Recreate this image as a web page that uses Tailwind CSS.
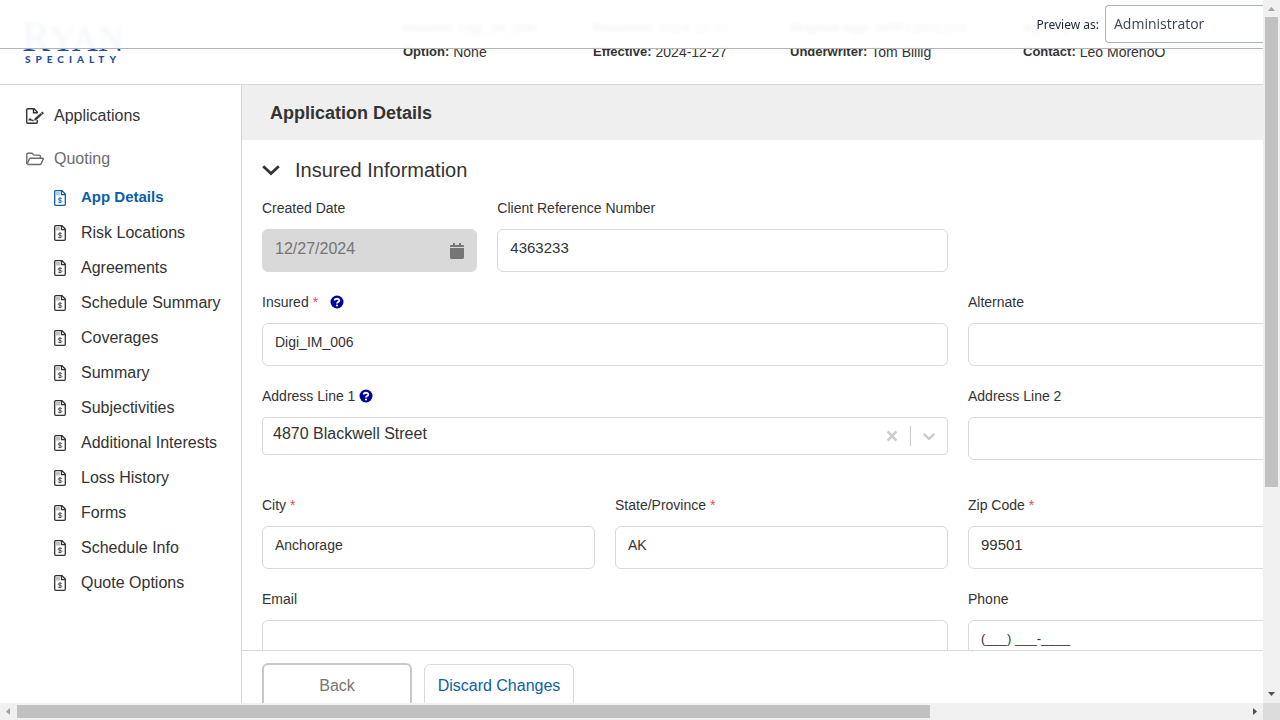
<!DOCTYPE html>
<html lang="en">
<head>
<meta charset="utf-8">
<title>Application Details</title>
<script src="https://cdn.jsdelivr.net/npm/@tailwindcss/browser@4"></script>
</head>
<body class="bg-white font-['Liberation_Sans',Arial,sans-serif] text-[#333]">
<svg class="hidden" aria-hidden="true">
  <symbol id="doc" viewBox="0 0 12 16">
    <path d="M1.7.7H8L11.3 4v10.2a1.100 1.100 0 0 1-1.100 1.100H1.800A1.100 1.100 0 0 1 .7 14.200V1.700a1 1 0 0 1 1-1Z" fill="none" stroke="currentColor" stroke-width="1.300"/>
    <path d="M7.500.7v4h3.800" fill="none" stroke="currentColor" stroke-width="1.300"/>
    <path d="M2 2h4v3.500H2Z" fill="currentColor" opacity=".3"/>
    <path d="M7.900 8.700C7.300 7.900 4.200 7.800 4.200 9.200c0 1.400 3.700.8 3.700 2.200 0 1.500-3.200 1.400-3.900.5M6 7.200v6" fill="none" stroke="currentColor" stroke-width=".8"/>
  </symbol>
  <symbol id="help" viewBox="0 0 14 14">
    <circle cx="7" cy="7" r="6.500" fill="#00009c"/>
    <path d="M4.700 5.500C4.800 3.200 9.300 3.100 9.300 5.500 9.300 7.100 7 6.900 7 8.500" fill="none" stroke="#fff" stroke-width="1.900"/>
    <circle cx="7" cy="10.500" r="1.100" fill="#fff"/>
  </symbol>
</svg>
<div class="grid h-screen grid-cols-[minmax(0,1fr)_17px] grid-rows-[minmax(0,1fr)_17px]">
  <div class="relative overflow-hidden">
    <div class="flex h-full min-w-[1700px] flex-col">
      <header class="flex h-[85px] shrink-0 border-b border-[#d6d6d6]">
        <a href="#" class="block w-[403px] shrink-0 pt-[13px] pl-[22px] text-[#1f4fa3]">
          <span class="block h-10 font-['Liberation_Serif',serif] text-[36px] leading-[48px]"><span class="text-[42px]">R</span>YAN</span>
          <span class="block pl-[3px] font-[Lato,sans-serif] text-[10px] leading-3 font-black tracking-[0.5em]">SPECIALTY</span>
        </a>
        <dl class="grid grid-cols-[190px_197px_233px_auto] content-start pt-4 text-sm leading-6">
          <div class="flex gap-1"><dt class="text-[13px] font-bold">Insured:</dt><dd>Digi_IM_006</dd></div>
          <div class="flex gap-1"><dt class="text-[13px] font-bold">Received:</dt><dd>2024-12-27</dd></div>
          <div class="flex gap-1"><dt class="text-[13px] font-bold">Original App:</dt><dd>APP12691233</dd></div>
          <div class="flex gap-1"><dt class="text-[13px] font-bold">Agency:</dt><dd>RT</dd></div>
          <div class="flex gap-1"><dt class="text-[13px] font-bold">Option:</dt><dd>None</dd></div>
          <div class="flex gap-1"><dt class="text-[13px] font-bold">Effective:</dt><dd>2024-12-27</dd></div>
          <div class="flex gap-1"><dt class="text-[13px] font-bold">Underwriter:</dt><dd>Tom Billig</dd></div>
          <div class="flex gap-1"><dt class="text-[13px] font-bold">Contact:</dt><dd>Leo MorenoO</dd></div>
        </dl>
      </header>
      <div class="flex min-h-0 flex-1">
        <nav class="w-[242px] shrink-0 border-r border-[#d6d6d6] pt-[9px] text-base">
          <a href="#" class="flex h-[43px] items-center gap-2.5 pl-[26px]">
            <svg class="h-4 w-[18px]" viewBox="0 0 18 16" fill="none" stroke="currentColor" stroke-width="1.400"><path d="M11.300 5.200V4L8 .7H1.700a1 1 0 0 0-1 1v12.600a1 1 0 0 0 1 1h8.600a1 1 0 0 0 1-1V12"/><path d="M7.500.7v4h3.800"/><path d="M2.800 12.500c.8-1.300 1.400-2 1.800-.8.400 1 .9-.2 1.500.5.400.4.900.3 1.400.3"/><path d="M8.500 12.300l.6-2 5.500-4.900 1.200 1.300-5.300 5Z" fill="currentColor" stroke-width=".6"/><path d="M15.700 5.700l1.500-1.300" stroke-width="2.200"/></svg>
            Applications</a>
          <a href="#" class="flex h-[43px] items-center gap-2.5 pl-[26px] text-[#6b6b6e]">
            <svg class="h-4 w-[18px]" viewBox="0 0 18 16" fill="none" stroke="currentColor" stroke-width="1.400" stroke-linejoin="round"><path d="M.8 13V3.200a1 1 0 0 1 1-1h4.400l1.700 1.900h5.500a1 1 0 0 1 1 1v2.200"/><path d="M1 13.300l2.500-5.500a1 1 0 0 1 .9-.5h12.200a.6.6 0 0 1 .6.900l-2.200 4.700a1 1 0 0 1-.9.600H1.500"/></svg>
            Quoting</a>
          <a href="#" class="flex h-[35px] items-center gap-[15px] pl-[54px] text-[15px] font-bold text-[#0b5ea8]"><svg class="h-4 w-3"><use href="#doc"/></svg>App Details</a>
          <a href="#" class="flex h-[35px] items-center gap-[15px] pl-[54px]"><svg class="h-4 w-3"><use href="#doc"/></svg>Risk Locations</a>
          <a href="#" class="flex h-[35px] items-center gap-[15px] pl-[54px]"><svg class="h-4 w-3"><use href="#doc"/></svg>Agreements</a>
          <a href="#" class="flex h-[35px] items-center gap-[15px] pl-[54px]"><svg class="h-4 w-3"><use href="#doc"/></svg>Schedule Summary</a>
          <a href="#" class="flex h-[35px] items-center gap-[15px] pl-[54px]"><svg class="h-4 w-3"><use href="#doc"/></svg>Coverages</a>
          <a href="#" class="flex h-[35px] items-center gap-[15px] pl-[54px]"><svg class="h-4 w-3"><use href="#doc"/></svg>Summary</a>
          <a href="#" class="flex h-[35px] items-center gap-[15px] pl-[54px]"><svg class="h-4 w-3"><use href="#doc"/></svg>Subjectivities</a>
          <a href="#" class="flex h-[35px] items-center gap-[15px] pl-[54px]"><svg class="h-4 w-3"><use href="#doc"/></svg>Additional Interests</a>
          <a href="#" class="flex h-[35px] items-center gap-[15px] pl-[54px]"><svg class="h-4 w-3"><use href="#doc"/></svg>Loss History</a>
          <a href="#" class="flex h-[35px] items-center gap-[15px] pl-[54px]"><svg class="h-4 w-3"><use href="#doc"/></svg>Forms</a>
          <a href="#" class="flex h-[35px] items-center gap-[15px] pl-[54px]"><svg class="h-4 w-3"><use href="#doc"/></svg>Schedule Info</a>
          <a href="#" class="flex h-[35px] items-center gap-[15px] pl-[54px]"><svg class="h-4 w-3"><use href="#doc"/></svg>Quote Options</a>
        </nav>
        <main class="flex min-w-0 flex-1 flex-col">
          <h1 class="flex h-[55px] shrink-0 items-center bg-[#efefef] pl-7 text-lg font-bold">Application Details</h1>
          <form class="min-h-0 flex-1 overflow-hidden pr-[46px] pl-5 text-sm">
            <h2 class="flex items-center gap-[15px] pt-4 pb-3.5 text-xl leading-7">
              <svg class="h-[18px] w-[18px]" viewBox="0 0 18 18" fill="none" stroke="currentColor" stroke-width="2.800"><path d="M1.200 5.200L9 12.600l7.800-7.400"/></svg>
              Insured Information</h2>
            <div class="grid grid-cols-12 gap-5">
              <div class="col-span-2">
                <label for="created" class="block leading-5">Created Date</label>
                <div class="mt-[11px] flex h-[43px] items-center rounded-md border border-[#d9d9d9] bg-[#d9d9d9] px-3 text-[#757575]">
                  <input id="created" disabled value="12/27/2024" class="w-full min-w-0 pb-1 text-base">
                  <svg class="h-4 w-3.5 shrink-0" viewBox="0 0 14 16" fill="currentColor"><path d="M0 4V3.200C0 2.500.5 2 1.200 2H3V.5C3 .2 3.200 0 3.500 0h1c.3 0 .5.2.5.5V2h4V.5c0-.3.200-.5.500-.5h1c.3 0 .5.200.5.500V2h1.800c.7 0 1.200.5 1.200 1.200V4ZM0 5h14v9.500c0 .8-.7 1.500-1.500 1.500h-11C.7 16 0 15.300 0 14.500Z"/></svg>
                </div>
              </div>
              <div class="col-span-4">
                <label for="ref" class="block leading-5">Client Reference Number</label>
                <input id="ref" value="4363233" class="mt-[11px] block h-[43px] w-full rounded-md border border-[#d9d9d9] px-3 pb-1.5 text-[15px]">
              </div>
              <div class="col-span-6 col-start-1">
                <label for="insured" class="flex items-center leading-5">Insured <span class="ml-1 text-[#f04848]">*</span><svg class="ml-3 h-3.5 w-3.5"><use href="#help"/></svg></label>
                <input id="insured" value="Digi_IM_006" class="mt-[11px] block h-[43px] w-full rounded-md border border-[#d9d9d9] px-3 pb-1.5">
              </div>
              <div class="col-span-6">
                <label for="alt" class="block leading-5">Alternate</label>
                <input id="alt" class="mt-[11px] block h-[43px] w-full rounded-md border border-[#d9d9d9] px-3 pb-1.5">
              </div>
              <div class="col-span-6">
                <label for="addr1" class="flex items-center gap-1 leading-5">Address Line 1<svg class="h-3.5 w-3.5"><use href="#help"/></svg></label>
                <div class="mt-[11px] flex h-[38px] items-center rounded-[4px] border border-[#d9d9d9] px-2.5 text-[#ccc]">
                  <input id="addr1" role="combobox" aria-expanded="false" value="4870 Blackwell Street" class="min-w-0 flex-1 pb-1 text-base text-[#333]">
                  <button type="button" aria-label="Clear"><svg class="h-4 w-4" viewBox="0 0 16 16" fill="none" stroke="currentColor" stroke-width="2.600"><path d="M3.700 3.300l8.600 9.400M12.300 3.300l-8.600 9.400"/></svg></button>
                  <span class="mx-2.5 h-5 w-px bg-[#ccc]"></span>
                  <button type="button" aria-label="Open list"><svg class="h-4 w-4" viewBox="0 0 16 16" fill="none" stroke="currentColor" stroke-width="2.500"><path d="M2.700 5.800L8 10.800l5.300-5"/></svg></button>
                </div>
              </div>
              <div class="col-span-6 pb-[15px]">
                <label for="addr2" class="block leading-5">Address Line 2</label>
                <input id="addr2" class="mt-[11px] block h-[43px] w-full rounded-md border border-[#d9d9d9] px-3 pb-1.5">
              </div>
              <div class="col-span-3">
                <label for="city" class="block leading-5">City <span class="text-[#f04848]">*</span></label>
                <input id="city" value="Anchorage" class="mt-[11px] block h-[43px] w-full rounded-md border border-[#d9d9d9] px-3 pb-1.5">
              </div>
              <div class="col-span-3">
                <label for="state" class="block leading-5">State/Province <span class="text-[#f04848]">*</span></label>
                <input id="state" value="AK" class="mt-[11px] block h-[43px] w-full rounded-md border border-[#d9d9d9] px-3 pb-1.5">
              </div>
              <div class="col-span-3">
                <label for="zip" class="block leading-5">Zip Code <span class="text-[#f04848]">*</span></label>
                <input id="zip" value="99501" class="mt-[11px] block h-[43px] w-full rounded-md border border-[#d9d9d9] px-3 pb-1.5 text-[15px]">
              </div>
              <div class="col-span-6 col-start-1">
                <label for="email" class="block leading-5">Email</label>
                <input id="email" type="email" class="mt-[11px] block h-[43px] w-full rounded-md border border-[#d9d9d9] px-3 pb-1.5">
              </div>
              <div class="col-span-3">
                <label for="phone" class="block leading-5">Phone</label>
                <input id="phone" type="tel" value="(___) ___-____" class="mt-[11px] block h-[43px] w-full rounded-md border border-[#d9d9d9] px-3 pb-1.5 text-[13px]">
              </div>
            </div>
          </form>
          <footer class="flex h-[53px] shrink-0 gap-3 overflow-hidden border-t border-[#d6d6d6] pt-3 pl-5 text-base">
            <button type="button" class="h-[46px] w-[150px] shrink-0 rounded-md border-2 border-[#c8c8c8] text-[#757575]">Back</button>
            <button type="button" class="mt-px h-11 w-[150px] shrink-0 rounded-md border border-[#d9d9d9] text-[#0b5ea8]">Discard Changes</button>
          </footer>
        </main>
      </div>
    </div>
    <div class="absolute inset-x-0 top-0 flex h-[49px] items-start justify-end gap-1.5 border-b border-[#b4b4b8] bg-white/95 pt-[5px] font-['Noto_Sans',sans-serif] text-[#1c2536] backdrop-blur-[2px]">
      <label for="role" class="text-[12px] leading-10">Preview as:</label>
      <select id="role" class="h-[38px] w-[158px] appearance-none rounded-l border border-r-0 border-[#a3b4c8] bg-white pl-2 text-sm text-[#39424f] font-['Open_Sans',sans-serif]"><option>Administrator</option></select>
    </div>
  </div>
  <div class="flex flex-col items-center bg-[#f0f0f0]" aria-hidden="true">
    <svg class="h-[17px] w-[17px] shrink-0" viewBox="0 0 17 17" fill="#a3a3a3"><path d="M5 11h7L8.500 7Z"/></svg>
    <div class="h-[470px] w-[13px] bg-[#c1c1c1]"></div>
    <svg class="mt-auto h-[17px] w-[17px] shrink-0" viewBox="0 0 17 17" fill="#505050"><path d="M5 6h7L8.500 10Z"/></svg>
  </div>
  <div class="flex items-center bg-[#f0f0f0]" aria-hidden="true">
    <svg class="h-[17px] w-[17px] shrink-0" viewBox="0 0 17 17" fill="#a3a3a3"><path d="M10 5v7L6 8.500Z"/></svg>
    <div class="h-[13px] w-[913px] bg-[#c1c1c1]"></div>
    <svg class="ml-auto h-[17px] w-[17px] shrink-0" viewBox="0 0 17 17" fill="#505050"><path d="M7 5v7l4-3.500Z"/></svg>
  </div>
  <div class="bg-[#dcdcdc]"></div>
</div>
</body>
</html>
